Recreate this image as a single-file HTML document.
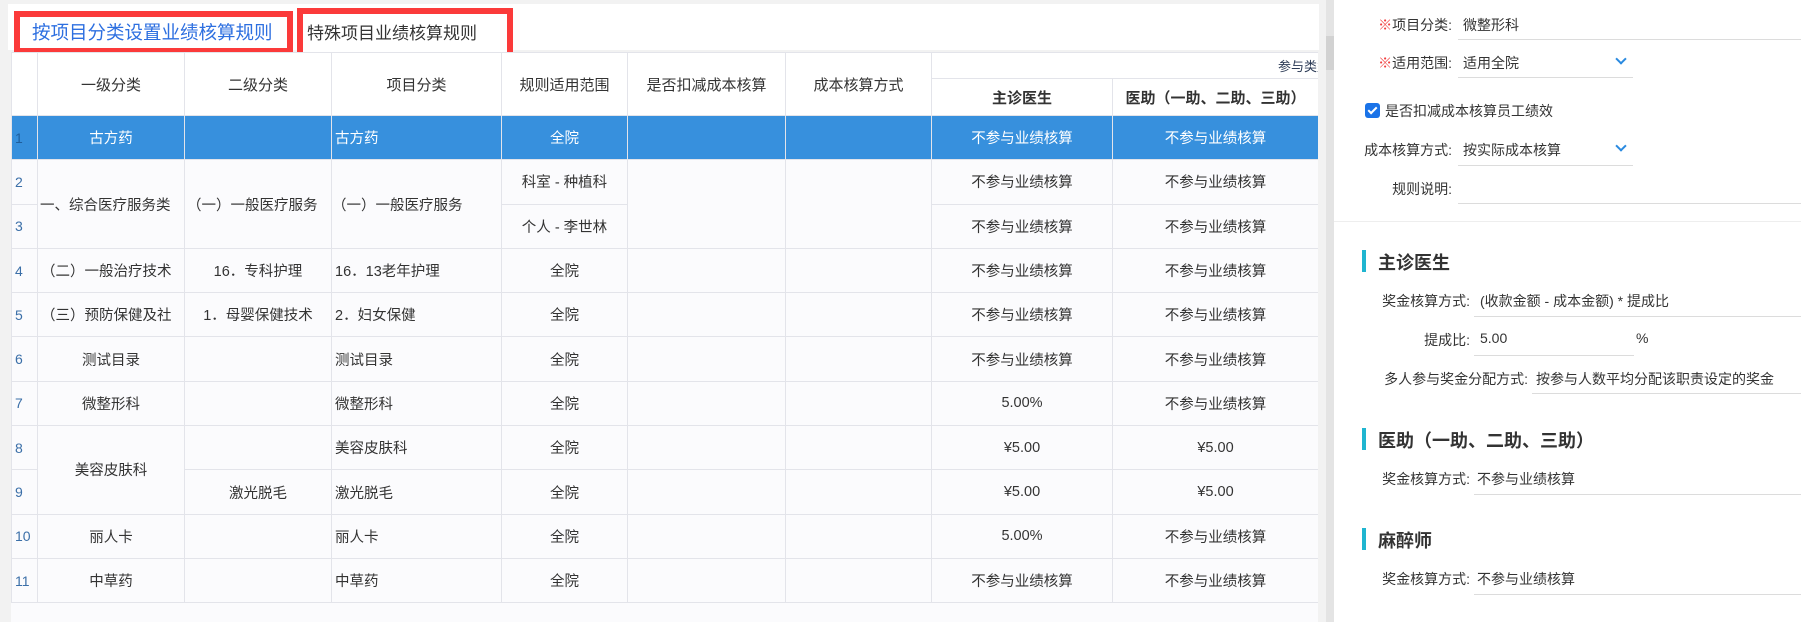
<!DOCTYPE html>
<html><head><meta charset="utf-8">
<style>
*{margin:0;padding:0;box-sizing:border-box}
body{width:1801px;height:622px;background:#f2f2f2;position:relative;overflow:hidden;font-family:"Liberation Sans","Noto Sans CJK SC",sans-serif;color:#333}
.abs{position:absolute}
.tabbar{left:8px;top:4px;width:1311px;height:46px;background:#fff}
.rbox{border:6px solid #fb3a3a;background:#fff}
.wrap{left:11px;top:52px;width:1307px;height:570px;overflow:hidden;background:#fbfbfd}
table{border-collapse:collapse;table-layout:fixed;width:1560px}
td,th{border:1px solid #e3e4ea;font-size:14.5px;font-weight:normal;text-align:center;white-space:nowrap;overflow:hidden;color:#333;background:#fbfbfd;padding:0}
tr.r{height:44.3px}
th{background:#fff;font-size:15px}
td.idx{color:#3b6fa8;text-align:left;padding-left:3px;font-size:14px}
td.l{text-align:left;padding-left:3px}
tr.sel td{background:#3790dd;color:#fff}
tr.sel td.idx{color:#1f5e9c}
.lbl{font-size:14px;color:#333;text-align:right}
.val{font-size:14px;color:#333}
.ul{height:1px;background:#dcdcdc}
.bar{width:4px;height:22px;background:#1fb5d0}
.h{font-size:18px;color:#333;font-weight:bold}
.chev{width:8px;height:8px;border-right:2.5px solid #2a8ae0;border-bottom:2.5px solid #2a8ae0;transform:rotate(45deg)}
</style></head><body>
<div class="abs tabbar"></div>
<div class="abs rbox" style="left:14px;top:11px;width:279px;height:43px"></div>
<div class="abs" style="left:32px;top:19px;font-size:18.5px;color:#2d6fe0">按项目分类设置业绩核算规则</div>
<div class="abs rbox" style="left:297px;top:8px;width:216px;height:52px"></div>
<div class="abs" style="left:307px;top:19px;font-size:17px;color:#333">特殊项目业绩核算规则</div>

<div class="abs wrap">
<table>
<colgroup><col style="width:26px"><col style="width:147px"><col style="width:147px"><col style="width:170px"><col style="width:126px"><col style="width:158px"><col style="width:146px"><col style="width:181px"><col style="width:206px"><col style="width:253px"></colgroup>
<tr style="height:26px"><th rowspan="2"></th><th rowspan="2">一级分类</th><th rowspan="2">二级分类</th><th rowspan="2">项目分类</th><th rowspan="2">规则适用范围</th><th rowspan="2">是否扣减成本核算</th><th rowspan="2">成本核算方式</th><th colspan="3" style="text-align:left;padding-left:346px;font-size:13px;color:#2b3a55">参与类型</th></tr>
<tr style="height:37px"><th style="font-weight:bold">主诊医生</th><th style="font-weight:bold">医助（一助、二助、三助）</th><th></th></tr>
<tr class="r sel"><td class="idx">1</td><td>古方药</td><td></td><td class="l">古方药</td><td>全院</td><td></td><td></td><td>不参与业绩核算</td><td>不参与业绩核算</td><td></td></tr>
<tr class="r"><td class="idx">2</td><td rowspan="2" class="l" style="padding-left:2px">一、综合医疗服务类</td><td rowspan="2" class="l" style="padding-left:2px">（一）一般医疗服务</td><td rowspan="2" class="l" style="padding-left:0">（一）一般医疗服务</td><td>科室 - 种植科</td><td rowspan="2"></td><td rowspan="2"></td><td>不参与业绩核算</td><td>不参与业绩核算</td><td></td></tr>
<tr class="r"><td class="idx">3</td><td>个人 - 李世林</td><td>不参与业绩核算</td><td>不参与业绩核算</td><td></td></tr>
<tr class="r"><td class="idx">4</td><td class="l">（二）一般治疗技术</td><td>16．专科护理</td><td class="l">16．13老年护理</td><td>全院</td><td></td><td></td><td>不参与业绩核算</td><td>不参与业绩核算</td><td></td></tr>
<tr class="r"><td class="idx">5</td><td class="l">（三）预防保健及社</td><td>1．母婴保健技术</td><td class="l">2．妇女保健</td><td>全院</td><td></td><td></td><td>不参与业绩核算</td><td>不参与业绩核算</td><td></td></tr>
<tr class="r"><td class="idx">6</td><td>测试目录</td><td></td><td class="l">测试目录</td><td>全院</td><td></td><td></td><td>不参与业绩核算</td><td>不参与业绩核算</td><td></td></tr>
<tr class="r"><td class="idx">7</td><td>微整形科</td><td></td><td class="l">微整形科</td><td>全院</td><td></td><td></td><td>5.00%</td><td>不参与业绩核算</td><td></td></tr>
<tr class="r"><td class="idx">8</td><td rowspan="2">美容皮肤科</td><td></td><td class="l">美容皮肤科</td><td>全院</td><td></td><td></td><td>¥5.00</td><td>¥5.00</td><td></td></tr>
<tr class="r"><td class="idx">9</td><td>激光脱毛</td><td class="l">激光脱毛</td><td>全院</td><td></td><td></td><td>¥5.00</td><td>¥5.00</td><td></td></tr>
<tr class="r"><td class="idx">10</td><td>丽人卡</td><td></td><td class="l">丽人卡</td><td>全院</td><td></td><td></td><td>5.00%</td><td>不参与业绩核算</td><td></td></tr>
<tr class="r"><td class="idx">11</td><td>中草药</td><td></td><td class="l">中草药</td><td>全院</td><td></td><td></td><td>不参与业绩核算</td><td>不参与业绩核算</td><td></td></tr>
</table>
</div>

<!-- scrollbar -->
<div class="abs" style="left:1326px;top:0;width:8px;height:622px;background:#e4e4e4"></div>
<div class="abs" style="left:1326px;top:36px;width:8px;height:34px;background:#d2d2d2"></div>

<!-- right panel -->
<div class="abs" style="left:1334px;top:0;width:467px;height:622px;background:#fff"></div>
<div class="abs lbl" style="left:1370px;top:15px;width:82px"><span style="color:#f03c3c">※</span>项目分类:</div>
<div class="abs val" style="left:1463px;top:15px">微整形科</div>
<div class="abs ul" style="left:1458px;top:39px;width:343px"></div>
<div class="abs lbl" style="left:1370px;top:53px;width:82px"><span style="color:#f03c3c">※</span>适用范围:</div>
<div class="abs val" style="left:1463px;top:53px">适用全院</div>
<div class="abs chev" style="left:1617px;top:55px"></div>
<div class="abs ul" style="left:1458px;top:77px;width:175px"></div>
<div class="abs" style="left:1365px;top:103px;width:15px;height:15px;background:#1a73e8;border-radius:3px"></div>
<div class="abs" style="left:1370px;top:105px;width:5px;height:9px;border-right:2px solid #fff;border-bottom:2px solid #fff;transform:rotate(45deg)"></div>
<div class="abs val" style="left:1385px;top:101px">是否扣减成本核算员工绩效</div>
<div class="abs lbl" style="left:1360px;top:140px;width:92px">成本核算方式:</div>
<div class="abs val" style="left:1463px;top:140px">按实际成本核算</div>
<div class="abs chev" style="left:1617px;top:142px"></div>
<div class="abs ul" style="left:1458px;top:165px;width:175px"></div>
<div class="abs lbl" style="left:1370px;top:179px;width:82px">规则说明:</div>
<div class="abs ul" style="left:1458px;top:203px;width:343px"></div>
<div class="abs" style="left:1334px;top:221px;width:467px;height:1px;background:#eee"></div>

<div class="abs bar" style="left:1362px;top:250px"></div>
<div class="abs h" style="left:1378px;top:249px">主诊医生</div>
<div class="abs lbl" style="left:1370px;top:291px;width:100px">奖金核算方式:</div>
<div class="abs val" style="left:1480px;top:291px">(收款金额 - 成本金额) * 提成比</div>
<div class="abs ul" style="left:1474px;top:316px;width:327px"></div>
<div class="abs lbl" style="left:1400px;top:330px;width:70px">提成比:</div>
<div class="abs val" style="left:1480px;top:330px">5.00</div>
<div class="abs val" style="left:1636px;top:330px">%</div>
<div class="abs ul" style="left:1474px;top:355px;width:160px"></div>
<div class="abs lbl" style="left:1370px;top:369px;width:158px">多人参与奖金分配方式:</div>
<div class="abs val" style="left:1536px;top:369px">按参与人数平均分配该职责设定的奖金</div>
<div class="abs ul" style="left:1532px;top:393px;width:269px"></div>

<div class="abs bar" style="left:1362px;top:428px"></div>
<div class="abs h" style="left:1378px;top:427px">医助（一助、二助、三助）</div>
<div class="abs lbl" style="left:1370px;top:469px;width:100px">奖金核算方式:</div>
<div class="abs val" style="left:1477px;top:469px">不参与业绩核算</div>
<div class="abs ul" style="left:1474px;top:494px;width:327px"></div>

<div class="abs bar" style="left:1362px;top:528px"></div>
<div class="abs h" style="left:1378px;top:527px">麻醉师</div>
<div class="abs lbl" style="left:1370px;top:569px;width:100px">奖金核算方式:</div>
<div class="abs val" style="left:1477px;top:569px">不参与业绩核算</div>
<div class="abs ul" style="left:1474px;top:594px;width:327px"></div>
</body></html>
